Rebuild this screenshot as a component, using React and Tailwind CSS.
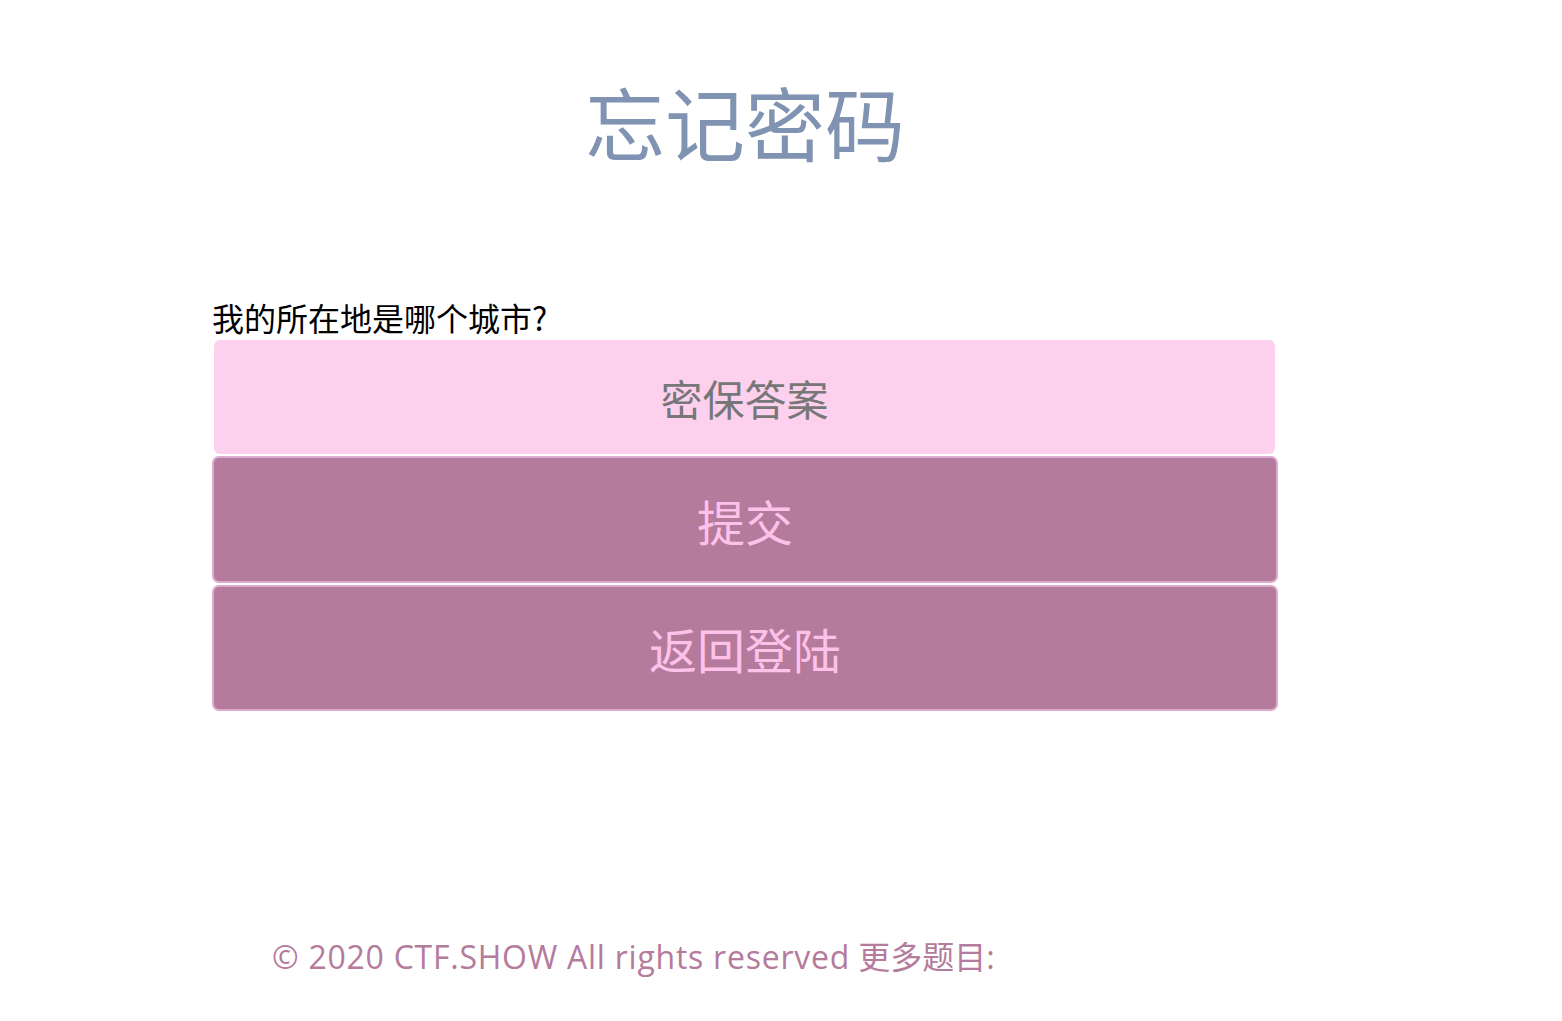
export default function App() {
  return (
    <div className="min-h-[1021px] bg-white font-['Noto_Sans_CJK_SC','Noto_Sans',sans-serif]">
      <div className="ml-[212px] w-[1066px] flex flex-col">
        <h1 className="mt-[80px] text-center text-[80px] leading-[80px] text-[#8193b2] font-normal">
          忘记密码
        </h1>
        <div className="mt-[141px] text-[32px] leading-[32px] text-black">
          我的所在地是哪个城市?
        </div>
        <input
          className="mt-[7px] ml-[2px] w-[1061px] h-[114px] rounded-[6px] bg-[#fdd0ee] text-center text-[42px] outline-none placeholder:text-[#777777] font-['Noto_Sans_CJK_SC',sans-serif]"
          placeholder="密保答案"
        />
        <button className="mt-[2px] h-[127px] w-full rounded-[7px] border-2 border-[#dcaad0] bg-[#b57b9c] text-[48px] leading-none text-[#fdc1ea] font-['Noto_Sans_CJK_SC',sans-serif]">
          提交
        </button>
        <button className="mt-[2px] h-[126px] w-full rounded-[7px] border-2 border-[#dcaad0] bg-[#b57b9c] text-[48px] leading-none text-[#fdc1ea] font-['Noto_Sans_CJK_SC',sans-serif]">
          返回登陆
        </button>
      </div>
      <div className="mt-[230px] ml-[272px] text-[32px] leading-[32px] text-[#b57b9c] font-['Open_Sans','Noto_Sans_CJK_SC',sans-serif]">
        <span className="tracking-[0.75px]">© 2020 CTF.SHOW All rights reserved</span>
        <span> 更多题目:</span>
      </div>
    </div>
  );
}
